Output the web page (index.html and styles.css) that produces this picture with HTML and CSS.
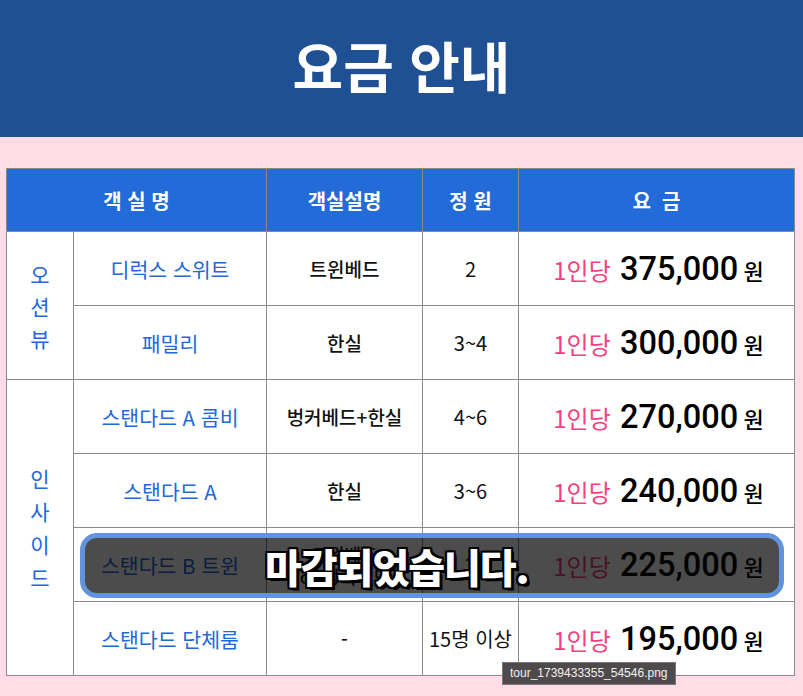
FILE: index.html
```html
<!DOCTYPE html>
<html lang="ko">
<head>
<meta charset="utf-8">
<link rel="stylesheet" href="styles.css">
</head>
<body>
<header class="top">
  <h1 class="title">요금 안내</h1>
</header>
<main class="content">
  <div class="table-wrap">
    <table class="price">
      <colgroup>
        <col class="c1"><col class="c2"><col class="c3"><col class="c4"><col class="c5">
      </colgroup>
      <thead>
        <tr>
          <th colspan="2">객 실 명</th>
          <th>객실설명</th>
          <th>정 원</th>
          <th>요&nbsp;&nbsp;금</th>
        </tr>
      </thead>
      <tbody>
        <tr>
          <td rowspan="2" class="group">오<br>션<br>뷰</td>
          <td class="room">디럭스 스위트</td>
          <td>트윈베드</td>
          <td class="num">2</td>
          <td class="fee"><span class="per">1인당</span> <span class="amt">375,000</span> <span class="won">원</span></td>
        </tr>
        <tr>
          <td class="room">패밀리</td>
          <td>한실</td>
          <td class="num">3~4</td>
          <td class="fee"><span class="per">1인당</span> <span class="amt">300,000</span> <span class="won">원</span></td>
        </tr>
        <tr>
          <td rowspan="4" class="group g2">인<br>사<br>이<br>드</td>
          <td class="room">스탠다드 A 콤비</td>
          <td>벙커베드+한실</td>
          <td class="num">4~6</td>
          <td class="fee"><span class="per">1인당</span> <span class="amt">270,000</span> <span class="won">원</span></td>
        </tr>
        <tr>
          <td class="room">스탠다드 A</td>
          <td>한실</td>
          <td class="num">3~6</td>
          <td class="fee"><span class="per">1인당</span> <span class="amt">240,000</span> <span class="won">원</span></td>
        </tr>
        <tr>
          <td class="room">스탠다드 B 트윈</td>
          <td class="two">트윈베드<br>or 벙커베드</td>
          <td class="num">2</td>
          <td class="fee"><span class="per">1인당</span> <span class="amt">225,000</span> <span class="won">원</span></td>
        </tr>
        <tr>
          <td class="room">스탠다드 단체룸</td>
          <td>-</td>
          <td class="num">15명 이상</td>
          <td class="fee"><span class="per">1인당</span> <span class="amt">195,000</span> <span class="won">원</span></td>
        </tr>
      </tbody>
    </table>
    <div class="closed"><span class="closed-text">마감되었습니다.</span></div>
    <div class="tip">tour_1739433355_54546.png</div>
  </div>
</main>
</body>
</html>
```

FILE: styles.css
```css
html, body {
  margin: 0;
  padding: 0;
}
body {
  background: #ffdce6;
  font-family: "Noto Sans CJK KR", "Noto Sans", sans-serif;
  width: 803px;
  height: 696px;
  overflow: hidden;
}
.top {
  background: #1f5094;
  height: 137px;
  display: flex;
  align-items: center;
  justify-content: center;
}
.title {
  margin: 0;
  color: #fff;
  font-size: 55px;
  font-weight: 700;
  letter-spacing: 0;
  line-height: 1;
  padding-bottom: 8px;
}
.content {
  padding: 31px 0 0 6px;
}
.table-wrap {
  position: relative;
  width: 788px;
}
.price {
  border-collapse: collapse;
  width: 788px;
  table-layout: fixed;
  background: #fff;
}
.c1 { width: 67px; }
.c2 { width: 193px; }
.c3 { width: 156px; }
.c4 { width: 96px; }
.c5 { width: 276px; }
.price th, .price td {
  border: 1px solid #8a8a8a;
  text-align: center;
  vertical-align: middle;
  padding: 0;
}
.price th {
  background: #226bd8;
  color: #fff;
  font-size: 20px;
  font-weight: 700;
  height: 62px;
}
.price td {
  height: 73px;
  font-size: 19px;
  font-weight: 500;
  color: #111;
}
.price td.group {
  color: #2268d8;
  font-size: 21px;
  font-weight: 400;
  line-height: 32px;
}
.price td.g2 {
  line-height: 33px;
}
.price td.room {
  color: #2268d8;
  font-size: 20.5px;
  font-weight: 400;
}
.price td.two {
  font-size: 18px;
  line-height: 22px;
}
.price td.num {
  font-size: 20px;
  font-weight: 400;
}
.price td.fee {
  padding-left: 4px;
  white-space: nowrap;
}
.per {
  color: #f2417d;
  font-size: 24px;
  font-weight: 400;
}
.amt {
  font-family: Roboto, "Noto Sans", sans-serif;
  font-size: 32.5px;
  font-weight: 500;
  color: #000;
  margin-left: 4px;
}
.won {
  font-size: 22px;
  color: #000;
}
.closed {
  position: absolute;
  left: 74px;
  top: 365px;
  width: 704px;
  height: 65px;
  box-sizing: border-box;
  border: 5px solid #6393dc;
  border-radius: 17px;
  background: rgba(0, 0, 0, 0.7);
  display: flex;
  align-items: center;
  padding-left: 180px;
}
.closed-text {
  color: #fff;
  font-size: 40px;
  font-weight: 900;
  letter-spacing: -1px;
  line-height: 1;
  text-shadow:
    -2px -2px 0 #000, 2px -2px 0 #000, -2px 2px 0 #000, 2px 2px 0 #000,
    0 -2px 0 #000, 0 2px 0 #000, -2px 0 0 #000, 2px 0 0 #000,
    3px 3px 0 #000;
}
.tip {
  position: absolute;
  left: 496px;
  top: 494px;
  background: #4f4a4c;
  border: 1px solid #7a7678;
  color: #f2f2f2;
  font-family: "Liberation Sans", Arial, sans-serif;
  font-size: 12px;
  padding: 3px 7px 4px;
  line-height: 14px;
  white-space: nowrap;
}
```
